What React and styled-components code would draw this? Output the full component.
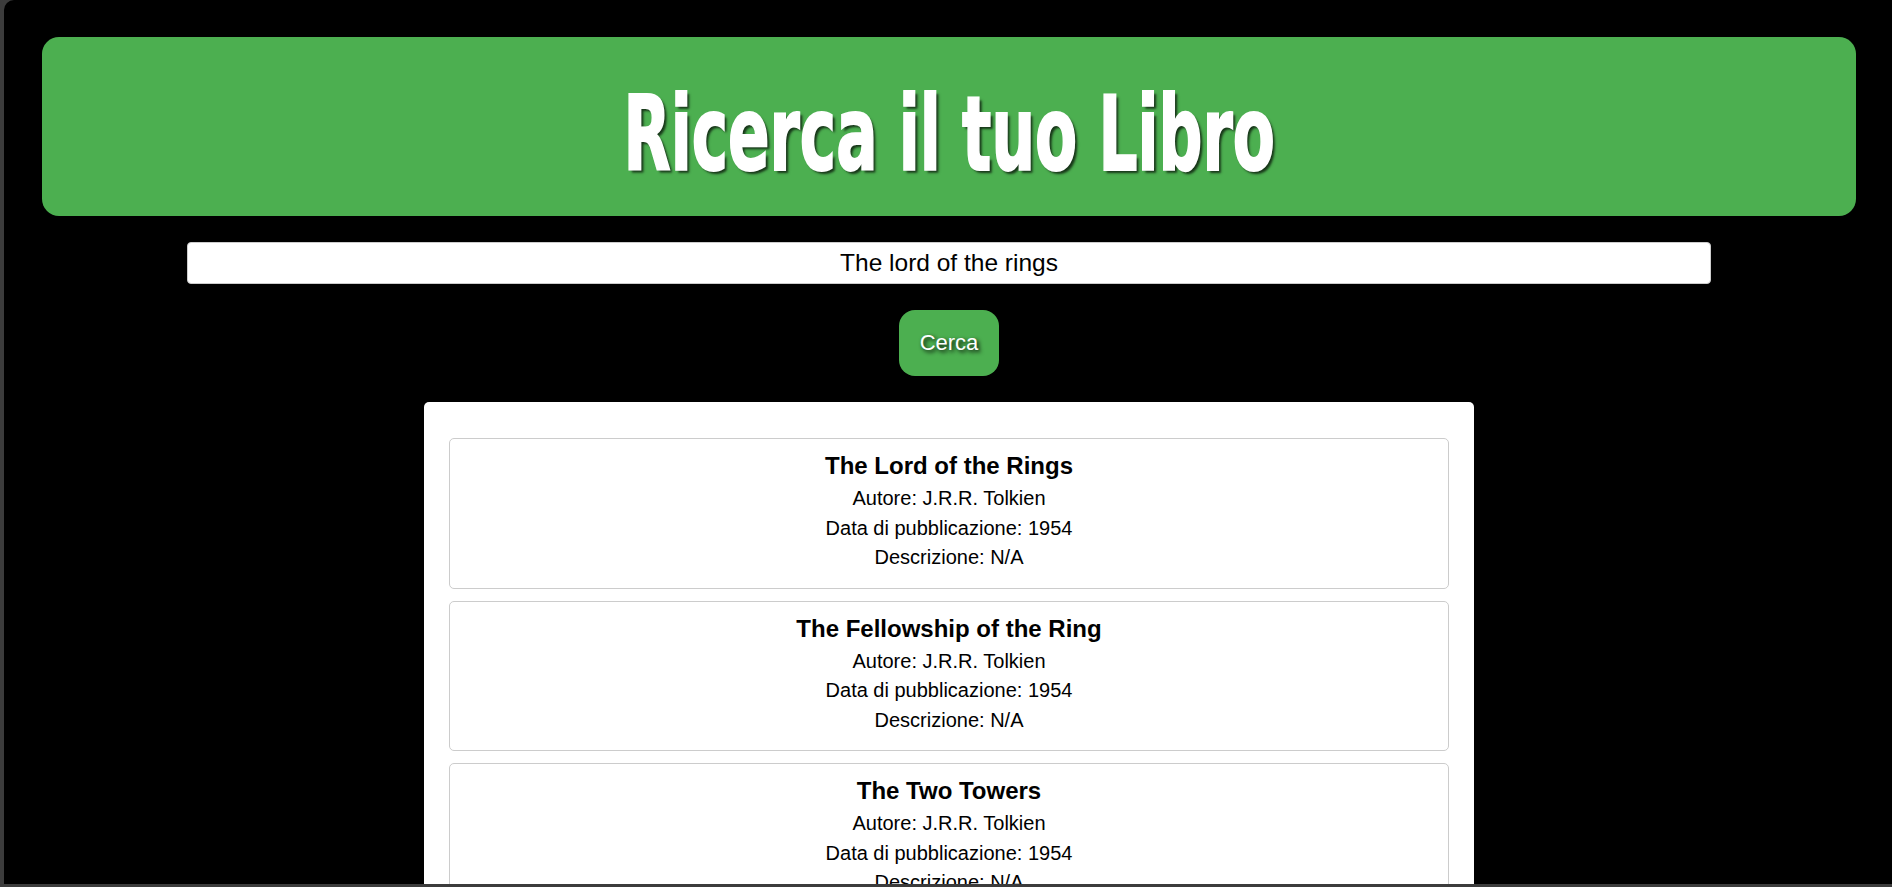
import styled, { createGlobalStyle } from "styled-components";

const GlobalStyle = createGlobalStyle`
  html, body {
    margin: 0;
    height: 100%;
  }
  body {
    background: #3c3c3c;
    font-family: "Liberation Sans", Arial, sans-serif;
    overflow: hidden;
  }
`;

const Window = styled.div`
  height: 884px;
  margin-left: 4px;
  background: #000;
  border-top-left-radius: 10px;
  overflow: hidden;
  box-sizing: border-box;
  padding: 37px 36px 0 38px;
  display: flex;
  flex-direction: column;
  align-items: center;
`;

const Header = styled.header`
  align-self: stretch;
  display: flex;
  justify-content: center;
  background: #4caf50;
  border-radius: 17px;
  padding: 38px 0 23px;
`;

// condensed display face is not available, so squeeze a bold condensed one
const Title = styled.h1`
  margin: 0;
  font-family: "DejaVu Sans Condensed", "DejaVu Sans", sans-serif;
  font-weight: 700;
  font-size: 104px;
  line-height: 118px;
  color: #fff;
  -webkit-text-stroke: 2px #fff;
  text-shadow: 4px 3px 3px rgba(0, 0, 0, 0.7);
  transform: scaleX(0.655);
  white-space: nowrap;
`;

const SearchInput = styled.input`
  width: 1524px;
  margin-top: 26px;
  box-sizing: border-box;
  padding: 6px;
  font-family: "Liberation Sans", Arial, sans-serif;
  font-size: 24.5px;
  line-height: normal;
  text-align: center;
  color: #000;
  background: #fff;
  border: 1px solid #ccc;
  border-radius: 4px;
  outline: none;
`;

const SearchButton = styled.button`
  margin-top: 26px;
  padding: 20px 21px;
  font-family: "Liberation Sans", Arial, sans-serif;
  font-size: 22px;
  line-height: normal;
  color: #fff;
  background: #4caf50;
  border: none;
  border-radius: 16px;
  text-shadow: 2px 2px 4px #000;
  cursor: pointer;
`;

const Results = styled.section`
  margin-top: 26px;
  width: 1050px;
  box-sizing: border-box;
  background: #fff;
  border-radius: 5px;
  padding: 36px 25px 25px;
  display: flex;
  flex-direction: column;
  gap: 12px;
`;

const BookCard = styled.article`
  border: 1px solid #ccc;
  border-radius: 5px;
  padding: 13px 15px 15px;
  text-align: center;
  color: #000;
`;

const BookTitle = styled.h2`
  margin: 0 0 4px;
  font-size: 24px;
  font-weight: 700;
  line-height: normal;
`;

const BookInfo = styled.p`
  margin: 0;
  font-size: 20px;
  line-height: 29.5px;
`;

const books = [
  { title: "The Lord of the Rings", author: "J.R.R. Tolkien", year: 1954 },
  { title: "The Fellowship of the Ring", author: "J.R.R. Tolkien", year: 1954 },
  { title: "The Two Towers", author: "J.R.R. Tolkien", year: 1954 },
  { title: "The Return of the King", author: "J.R.R. Tolkien", year: 1955 },
];

export default function App() {
  return (
    <>
      <GlobalStyle />
      <Window>
        <Header>
          <Title>Ricerca il tuo Libro</Title>
        </Header>
        <SearchInput type="text" defaultValue="The lord of the rings" />
        <SearchButton>Cerca</SearchButton>
        <Results>
          {books.map((book) => (
            <BookCard key={book.title}>
              <BookTitle>{book.title}</BookTitle>
              <BookInfo>Autore: {book.author}</BookInfo>
              <BookInfo>Data di pubblicazione: {book.year}</BookInfo>
              <BookInfo>Descrizione: N/A</BookInfo>
            </BookCard>
          ))}
        </Results>
      </Window>
    </>
  );
}
